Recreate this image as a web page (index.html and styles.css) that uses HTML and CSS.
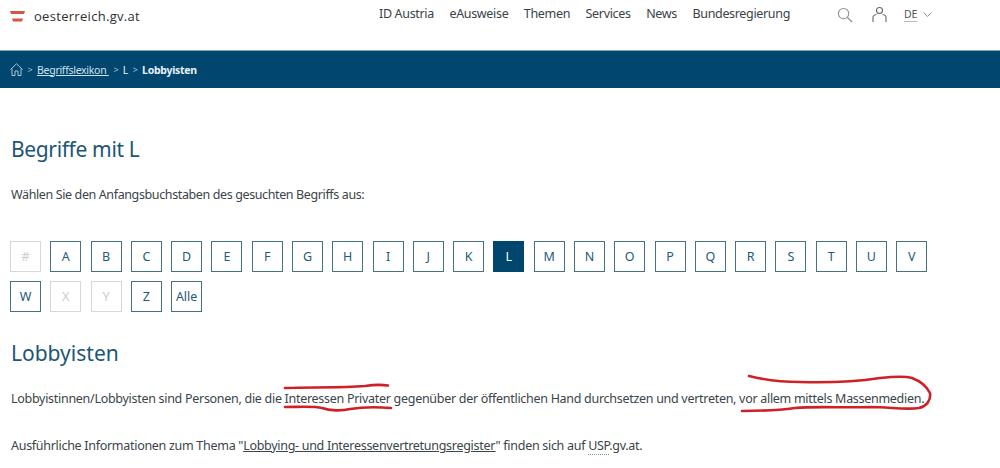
FILE: index.html
```html
<!DOCTYPE html>
<html lang="de">
<head>
    <meta charset="UTF-8">
    <meta name="viewport" content="width=device-width, initial-scale=1.0">
    <title>Lobbyisten</title>
    <link rel="stylesheet" href="styles.css">
</head>
<body>
    <div class="header">
        <a class="logo" href="#">
            <svg class="flag" width="15" height="11" viewBox="0 0 15 11"><path d="M0 0H15L14 3H1Z" fill="#d9543f"/><path d="M2 7.500H13L12 10.500H3Z" fill="#d9543f"/></svg>
            <span>oesterreich.gv.at</span>
        </a>
        <nav class="nav">
            <a href="#">ID Austria</a>
            <a href="#">eAusweise</a>
            <a href="#">Themen</a>
            <a href="#">Services</a>
            <a href="#">News</a>
            <a href="#">Bundesregierung</a>
        </nav>
        <div class="tools">
            <svg class="search" width="16" height="16" viewBox="0 0 17 17" fill="none" stroke="#8a8f92" stroke-width="1.100"><circle cx="7" cy="7" r="5.500"/><path d="M11 11L16 16" stroke-width="1.400"/></svg>
            <svg class="user" width="15" height="17" viewBox="0 0 15 17" fill="none" stroke="#5d6a72" stroke-width="1.100"><circle cx="7.500" cy="4.500" r="3"/><path d="M1 16V11.500Q1 9 4.500 8.500M14 16V11.500Q14 9 10.500 8.500"/></svg>
            <a class="lang" href="#">DE</a>
            <svg width="9" height="5" viewBox="0 0 9 5" fill="none" stroke="#8a9499"><path d="M.5 .5L4.500 4.500L8.500 .5"/></svg>
        </div>
    </div>
    <div class="crumbs">
        <svg width="13" height="13" viewBox="0 0 13 13" fill="none" stroke="#a9c6d6"><path d="M.5 6.500L6.500 .8L12.500 6.500M2 5.500V12.500H5V8H8V12.500H11V5.500"/></svg>
        <span class="sep">&gt;</span>
        <a href="#">Begriffslexikon&nbsp;</a>
        <span class="sep">&gt;</span>
        <span class="crumb">L</span>
        <span class="sep">&gt;</span>
        <strong>Lobbyisten</strong>
    </div>
    <div class="container">
        <h1>Begriffe mit L</h1>
        <p class="intro">Wählen Sie den Anfangsbuchstaben des gesuchten Begriffs aus:</p>
        <div class="letters">
            <span class="letter off">#</span>
            <a class="letter" href="#">A</a>
            <a class="letter" href="#">B</a>
            <a class="letter" href="#">C</a>
            <a class="letter" href="#">D</a>
            <a class="letter" href="#">E</a>
            <a class="letter" href="#">F</a>
            <a class="letter" href="#">G</a>
            <a class="letter" href="#">H</a>
            <a class="letter" href="#">I</a>
            <a class="letter" href="#">J</a>
            <a class="letter" href="#">K</a>
            <a class="letter active" href="#">L</a>
            <a class="letter" href="#">M</a>
            <a class="letter" href="#">N</a>
            <a class="letter" href="#">O</a>
            <a class="letter" href="#">P</a>
            <a class="letter" href="#">Q</a>
            <a class="letter" href="#">R</a>
            <a class="letter" href="#">S</a>
            <a class="letter" href="#">T</a>
            <a class="letter" href="#">U</a>
            <a class="letter" href="#">V</a>
            <a class="letter" href="#">W</a>
            <span class="letter off">X</span>
            <span class="letter off">Y</span>
            <a class="letter" href="#">Z</a>
            <a class="letter" href="#">Alle</a>
        </div>
        <h2>Lobbyisten</h2>
        <p class="def">Lobbyistinnen/Lobbyisten sind Personen, die die Interessen Privater gegenüber der öffentlichen Hand durchsetzen und vertreten, vor allem mittels Massenmedien.</p>
        <p class="more">Ausführliche Informationen zum Thema "<a href="#">Lobbying- und Interessenvertretungsregister</a>" finden sich auf <abbr>USP</abbr>.gv.at.</p>
    </div>
    <svg class="marks" width="1000" height="468" viewBox="0 0 1000 468" fill="none" stroke="#cf2027" stroke-linecap="round" stroke-linejoin="round" stroke-width="2.600">
        <path d="M285 388C310 387 340 388 365 386Q378 384 388 385.500"/>
        <path d="M285 407C300 407 315 406 322 408C330 411 342 411 350 409C362 407 378 407 391 408"/>
        <path d="M749 376C765 380 780 382 800 382C830 383 860 381 880 378C890 377 905 376 912 378C920 381 927 387 930 393C931 400 927 406 919 408C905 410 890 407 870 407C845 408 815 406 795 408C780 410 760 411 742 411"/>
    </svg>
</body>
</html>
```

FILE: styles.css
```css
body {
    font-family: "Noto Sans", Arial, sans-serif;
    background-color: white;
    color: #3a4449;
    margin: 0;
    padding: 0;
    height: 468px;
    overflow: hidden;
    position: relative;
    font-size: 12.5px;
    letter-spacing: -.29px;
}

a {
    color: inherit;
    text-decoration: none;
}

.header {
    height: 50px;
    display: flex;
    align-items: flex-start;
}

.logo {
    display: flex;
    align-items: center;
    gap: 9px;
    width: 130px;
    margin: 7px 0 0 10px;
    font-family: "Open Sans", sans-serif;
    font-size: 13px;
    letter-spacing: .3px;
    color: #2c2f31;
}

.nav {
    display: flex;
    gap: 15.500px;
    margin: 5px 0 0 239px;
    color: #3a4247;
    letter-spacing: -.33px;
}

.tools {
    display: flex;
    align-items: center;
    margin: 6px 0 0 47px;
}

.user {
    margin-left: 19px;
}

.lang {
    margin: 0 6px 0 17px;
    font-size: 10.500px;
    color: #4d5a62;
    border-bottom: 1px solid #b6bcc0;
}

.crumbs {
    height: 38px;
    background-color: #00466f;
    border-top: 1px solid #7fa6bd;
    box-sizing: border-box;
    display: flex;
    align-items: center;
    padding-left: 10px;
    color: #e8f1f6;
    font-size: 10.500px;
}

.crumbs a {
    color: #cfe2ee;
    text-decoration: underline;
}

.sep {
    margin: 0 4.600px;
    color: #a9c6d6;
    font-size: 9px;
}

.container {
    padding: 0 11px;
    width: 930px;
    box-sizing: border-box;
}

h1 {
    margin: 46px 0 0;
    font-size: 21px;
    line-height: 30px;
    font-weight: 400;
    color: #1c5676;
    letter-spacing: -.35px;
}

.intro {
    margin: 22px 0 0;
    line-height: 18px;
    letter-spacing: -.38px;
}

.letters {
    display: flex;
    flex-wrap: wrap;
    gap: 9px 9.290px;
    margin: 37px 0 0 -1px;
    width: 920px;
}

.letter {
    width: 31px;
    height: 31px;
    box-sizing: border-box;
    border: 1px solid #47717f;
    display: flex;
    align-items: center;
    justify-content: center;
    color: #24597a;
    letter-spacing: 0;
}

.letter.off {
    border-color: #d5d8da;
    color: #c9cdcf;
}

.letter.active {
    background-color: #00466f;
    border-color: #00466f;
    color: white;
}

h2 {
    margin: 26px 0 0;
    font-size: 21px;
    line-height: 30px;
    font-weight: 400;
    color: #1c5676;
    letter-spacing: 0;
}

.def {
    margin: 22px 0 0;
    line-height: 18px;
    white-space: nowrap;
}

.more {
    margin: 29px 0 0;
    line-height: 18px;
    white-space: nowrap;
}

.more a {
    text-decoration: underline;
}

abbr {
    border-bottom: 1px dotted #8b9297;
}

.marks {
    position: absolute;
    left: 0;
    top: 0;
}
```
